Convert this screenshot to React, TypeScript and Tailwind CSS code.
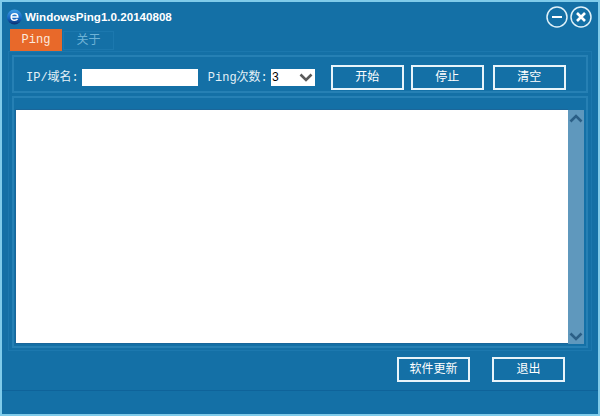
const cjk = "font-['Liberation_Mono','Noto_Sans_CJK_SC',monospace]";

function ActionButton({ label, className = '' }: { label: string; className?: string }) {
  return (
    <button className={`h-[25px] w-[73px] border-2 border-[#e8f4fa] bg-[#1470a6] text-[12px] leading-none text-white ${cjk} ${className}`}>
      {label}
    </button>
  );
}

function Chevron({ up, color }: { up?: boolean; color: string }) {
  return (
    <svg width="14" height="9" viewBox="0 0 14 9" className={color}>
      <path d={up ? 'M1.500 7.500 7 2l5.500 5.500' : 'M1.500 1.500 7 7l5.500-5.500'} fill="none" stroke="currentColor" strokeWidth="2.600" />
    </svg>
  );
}

export default function App() {
  return (
    <div className="flex h-[416px] w-[600px] flex-col border-2 border-[#7fcbea] bg-[#1470a6] text-white">
      {/* title bar */}
      <div className="flex h-[27px] items-center pl-[5px] pr-[6px] pt-[2px]">
        <svg width="15" height="16" viewBox="0 0 15 16" className="shrink-0">
          <defs>
            <linearGradient id="ball" x1="0" y1="0" x2="0" y2="1">
              <stop offset="0" stopColor="#3f9fe6" />
              <stop offset="0.6" stopColor="#1565c0" />
              <stop offset="1" stopColor="#0a2f6e" />
            </linearGradient>
          </defs>
          <circle cx="7.500" cy="8" r="7.500" fill="url(#ball)" />
          <path d="M4.200 8h6.600c0-2-1.300-3.200-3.100-3.200S4.200 6 4.200 8c0 2.100 1.400 3.300 3.400 3.300 1.300 0 2.300-.5 2.900-1.400" fill="none" stroke="#fff" strokeWidth="1.500" />
        </svg>
        <span className="ml-[3px] font-['Liberation_Sans',sans-serif] text-[11.600px] font-bold">WindowsPing1.0.20140808</span>
        <div className="ml-auto flex gap-[2px]">
          <svg width="22" height="22" viewBox="0 0 22 22">
            <circle cx="11" cy="11" r="10" fill="none" stroke="#dff1f9" strokeWidth="1.500" />
            <path d="M6 11h10" stroke="#fff" strokeWidth="2" />
          </svg>
          <svg width="22" height="22" viewBox="0 0 22 22">
            <circle cx="11" cy="11" r="10" fill="none" stroke="#dff1f9" strokeWidth="1.500" />
            <path d="m7 7 8 8M15 7l-8 8" stroke="#fff" strokeWidth="2.600" />
          </svg>
        </div>
      </div>

      {/* tabs */}
      <div className="flex h-[22px] items-start pl-2">
        <div className={`flex h-[22px] w-[52px] items-center justify-center bg-[#e8692a] text-[12px] text-[#fbeadf] ${cjk}`}>Ping</div>
        <div className={`ml-px mt-[2px] flex h-[19px] w-[51px] items-center justify-center border border-[#1c78ae] text-[12px] text-[#6fb3d6] ${cjk}`}>关于</div>
      </div>

      {/* tab content */}
      <div className="mx-[6px] flex h-[300px] flex-col gap-[3px] border border-[#1c78ae] px-[3px] pt-[3px]">
        <div className="flex h-[38px] items-center border-2 border-[#2680b4] pl-3 pt-[7px]">
          <span className={`text-[12px] text-[#e4f1f7] ${cjk}`}>IP/域名:</span>
          <div className="ml-[3px] h-[17px] w-[116px] bg-white" />
          <span className={`ml-[10px] w-[63px] text-[12px] text-[#e4f1f7] ${cjk}`}>Ping次数:</span>
          <div className="flex h-[17px] w-[44px] items-center justify-between bg-white pl-px pr-[2px]">
            <span className={`text-[12px] text-black ${cjk}`}>3</span>
            <Chevron color="text-[#5a5a5a]" />
          </div>
          <div className="ml-4 flex items-center gap-[7px]">
            <ActionButton label="开始" />
            <ActionButton label="停止" />
            <ActionButton label="清空" className="ml-[2px]" />
          </div>
        </div>
        <div className="flex h-[252px] border-2 border-[#2680b4] pb-[2px] pl-[1px] pr-[2px] pt-[11px]">
          <div className="flex-1 border-b border-l border-t border-[#1a669a] bg-white" />
          <div className="mt-px flex w-4 flex-col items-center justify-between bg-[#5f98bd] pb-[3px] pt-[4px]">
            <Chevron up color="text-[#2b5f86]" />
            <Chevron color="text-[#2b5f86]" />
          </div>
        </div>
      </div>

      {/* footer */}
      <div className="flex h-[40px] items-start justify-end gap-[22px] border-b border-[#0f639a] pr-[33px] pt-[6px]">
        <ActionButton label="软件更新" />
        <ActionButton label="退出" />
      </div>
    </div>
  );
}
